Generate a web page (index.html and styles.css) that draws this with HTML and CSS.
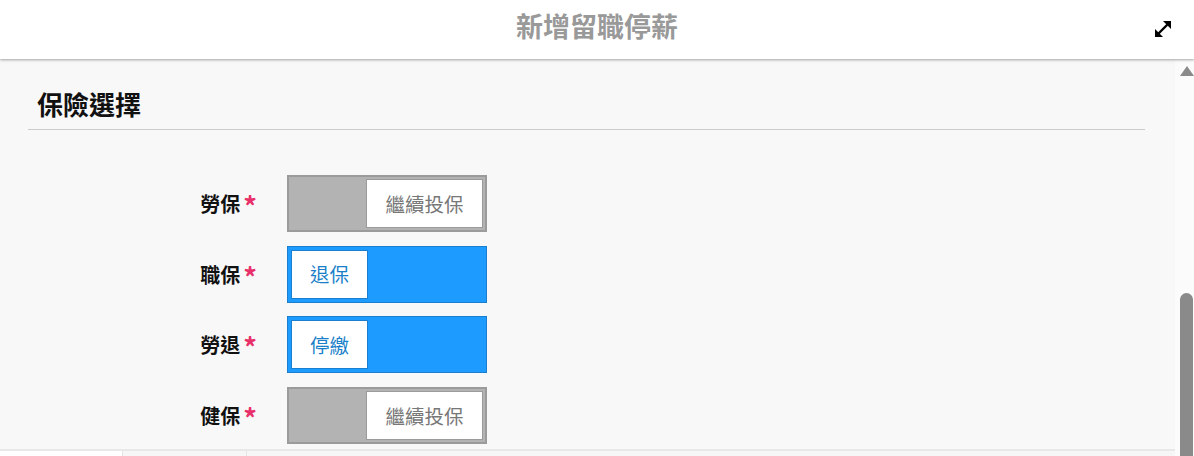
FILE: index.html
```html
<!DOCTYPE html>
<html lang="zh-Hant">
<head>
<meta charset="utf-8">
<title>新增留職停薪</title>
<link rel="stylesheet" href="styles.css">
</head>
<body>
<header class="topbar">
  <h1 class="topbar-title">新增留職停薪</h1>
  <button class="expand-btn" aria-label="expand">
    <svg width="18" height="18" viewBox="0 0 18 18">
      <path d="M4.5 13.5 L13.5 4.5" stroke="#000" stroke-width="2.4"/>
      <polygon points="17,1 17,9 9,1" fill="#000"/>
      <polygon points="1,17 1,9 9,17" fill="#000"/>
    </svg>
  </button>
</header>
<div class="main">
  <div class="content">
    <h2 class="section-title">保險選擇</h2>
    <div class="form">
      <div class="row">
        <label class="label">勞保<span class="req">*</span></label>
        <div class="toggle off"><span class="knob">繼續投保</span></div>
      </div>
      <div class="row">
        <label class="label">職保<span class="req">*</span></label>
        <div class="toggle on"><span class="knob">退保</span></div>
      </div>
      <div class="row">
        <label class="label">勞退<span class="req">*</span></label>
        <div class="toggle on"><span class="knob">停繳</span></div>
      </div>
      <div class="row">
        <label class="label">健保<span class="req">*</span></label>
        <div class="toggle off"><span class="knob">繼續投保</span></div>
      </div>
    </div>
    <div class="table-head">
      <div class="th first"></div>
      <div class="th"></div>
      <div class="th rest"></div>
    </div>
  </div>
  <div class="scrollbar">
    <div class="sb-arrow"></div>
    <div class="sb-track"><div class="sb-thumb"></div></div>
  </div>
</div>
</body>
</html>
```
FILE: styles.css
```css
* { box-sizing: border-box; }
html, body { margin: 0; padding: 0; }
body {
  width: 1194px;
  height: 456px;
  overflow: hidden;
  background: #f8f8f8;
  font-family: "Noto Sans CJK TC", "Noto Sans", sans-serif;
  color: #111;
}
.topbar {
  position: relative;
  z-index: 2;
  height: 59px;
  background: #fff;
  display: flex;
  align-items: center;
  justify-content: center;
  box-shadow: 0 1px 2px rgba(0,0,0,0.25), 0 2px 3px rgba(0,0,0,0.08);
}
.topbar-title {
  margin: 0;
  font-size: 27px;
  font-weight: 700;
  color: #999;
  line-height: 1;
  padding-bottom: 9px;
}
.expand-btn {
  position: absolute;
  right: 22px;
  top: 20px;
  border: 0;
  background: none;
  padding: 0;
  width: 18px;
  height: 18px;
}
.main {
  display: flex;
  height: 397px;
}
.content {
  flex: 1;
  display: flex;
  flex-direction: column;
}
.section-title {
  margin: 0 30px 0 28px;
  padding: 28px 0 9px 9px;
  font-size: 26px;
  font-weight: 700;
  line-height: 33px;
  border-bottom: 1px solid #ccc;
  color: #111;
}
.form {
  padding-top: 45px;
  display: flex;
  flex-direction: column;
  gap: 13.7px;
  flex: 1;
}
.row {
  display: flex;
  align-items: center;
  height: 57px;
}
.label {
  box-sizing: content-box;
  width: 257px;
  padding-right: 30px;
  text-align: right;
  font-size: 20px;
  font-weight: 700;
  color: #111;
  display: flex;
  justify-content: flex-end;
  align-items: center;
  gap: 3px;
}
.req {
  color: #e8306a;
  font-size: 27px;
  line-height: 1;
  padding-top: 4px;
}
.toggle {
  width: 200px;
  height: 57px;
  display: flex;
  align-items: stretch;
}
.toggle.off {
  background: #b3b3b3;
  border: 2px solid #9b9b9b;
  padding: 2px;
  justify-content: flex-end;
}
.toggle.on {
  background: #1e9bff;
  border: 1px solid #1a7fd0;
  padding: 3px;
  justify-content: flex-start;
}
.knob {
  background: #fff;
  display: flex;
  align-items: center;
  justify-content: center;
  font-size: 19.5px;
  padding-bottom: 1px;
}
.toggle.off .knob {
  width: 117px;
  border: 1px solid #9b9b9b;
  color: #777;
}
.toggle.on .knob {
  width: 77px;
  border: 1px solid #1a7fd0;
  color: #1a7fc8;
}
.table-head {
  display: flex;
  height: 7px;
  border-top: 2px solid #e8e8e8;
}
.th { width: 124px; background: #f6f6f6; border-left: 1px solid #e4e4e4; }
.th.first { width: 122px; background: #fff; border-left: 0; }
.th.rest { flex: 1; }
.scrollbar {
  width: 19px;
  background: #fbfbfb;
  display: flex;
  flex-direction: column;
  align-items: center;
}
.sb-arrow {
  margin-top: 7px;
  margin-left: 4px;
  width: 0;
  height: 0;
  border-left: 7px solid transparent;
  border-right: 7px solid transparent;
  border-bottom: 10px solid #8a8a8a;
}
.sb-track {
  flex: 1;
  width: 100%;
  display: flex;
  flex-direction: column;
  justify-content: flex-end;
  align-items: flex-end;
  padding-right: 1px;
}
.sb-thumb {
  width: 13px;
  height: 163px;
  background: #8a8a8a;
  border-radius: 7px 7px 0 0;
}
```
